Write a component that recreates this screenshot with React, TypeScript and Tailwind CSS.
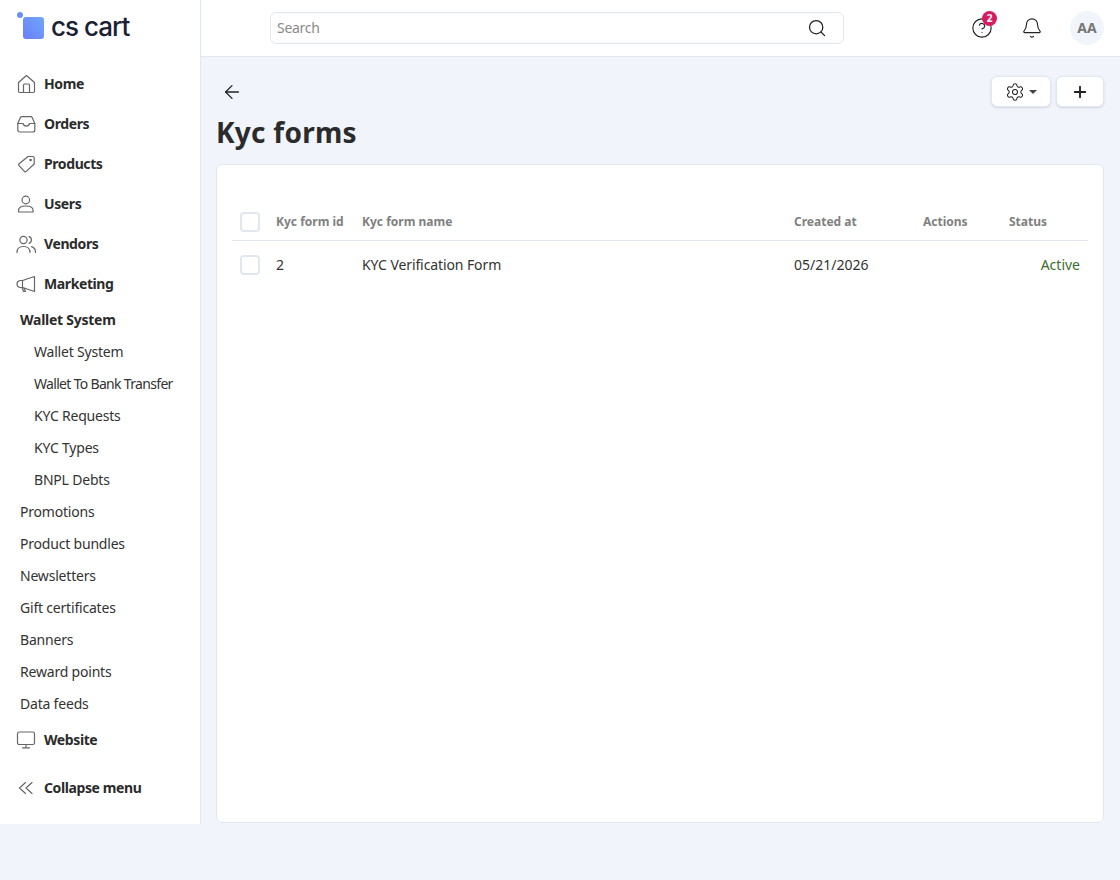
import { ArrowLeft, Bell, CircleHelp, Plus, Search, Settings } from 'lucide-react'
import type { ReactNode } from 'react'

const font = { fontFamily: '"Noto Sans", sans-serif' }

function NavIcon({ children }: { children: ReactNode }) {
  return (
    <svg width="20" height="20" viewBox="0 0 20 20" fill="none" stroke="currentColor" strokeWidth="1.2" strokeLinecap="round" strokeLinejoin="round">
      {children}
    </svg>
  )
}

function NavItem({ icon, label }: { icon: ReactNode; label: string }) {
  return (
    <div className="flex h-10 items-center pl-4">
      <span className="flex w-7 text-[#666]">{icon}</span>
      <span className="text-sm font-bold tracking-[-0.4px] text-[#2b2b2b]">{label}</span>
    </div>
  )
}

function SubItem({ label, indent, tight }: { label: string; indent?: boolean; tight?: boolean }) {
  return (
    <div className={`flex h-8 items-center text-sm text-[#333] ${indent ? 'pl-[34px]' : 'pl-5'} ${tight ? 'tracking-[-0.68px]' : 'tracking-[-0.2px]'}`}>
      {label}
    </div>
  )
}

export default function App() {
  return (
    <div style={font} className="flex h-[880px] w-[1120px] overflow-hidden bg-[#f1f4fb]">
      <aside className="h-[824px] w-[201px] shrink-0 border-r border-[#e2e6ef] bg-white">
        <div className="flex h-[64px] items-start pl-[17px] pt-3">
          <svg width="28" height="28" viewBox="0 0 28 28" className="shrink-0">
            <defs>
              <linearGradient id="logo" x1="1" y1="0" x2="0" y2="1">
                <stop offset="0" stopColor="#6ea8fb" />
                <stop offset="1" stopColor="#6c7dfb" />
              </linearGradient>
            </defs>
            <circle cx="3" cy="3" r="3" fill="#6b90f5" />
            <rect x="6" y="5" width="21" height="22" rx="3" fill="url(#logo)" />
          </svg>
          <span className="ml-[6px] text-[26px] leading-[30px] font-medium tracking-[-1px] text-[#1c2033]" style={{ fontFamily: 'Inter, sans-serif' }}>
            cs cart
          </span>
        </div>
        <NavItem
          label="Home"
          icon={
            <NavIcon>
              <path d="M2.5 8.5 10.5 1.5l8 7v8.8a1.2 1.2 0 0 1-1.2 1.2H3.7a1.2 1.2 0 0 1-1.2-1.2Z" />
              <path d="M7.5 18.5V11a1 1 0 0 1 1-1h4a1 1 0 0 1 1 1v7.5" />
            </NavIcon>
          }
        />
        <NavItem
          label="Orders"
          icon={
            <NavIcon>
              <path d="M1.8 9.5 4.4 3.6a1.8 1.8 0 0 1 1.6-1h8.6a1.8 1.8 0 0 1 1.6 1l2.6 5.9V16a2 2 0 0 1-2 2H3.8a2 2 0 0 1-2-2Z" />
              <path d="M1.8 9.5H7a3.4 3.4 0 0 0 6.600 0h5.200" />
            </NavIcon>
          }
        />
        <NavItem
          label="Products"
          icon={
            <NavIcon>
              <path d="M12 2.500h5a1.200 1.200 0 0 1 1.200 1.200V10L10 17.600a1 1 0 0 1-1.400 0l-5.800-6.200a1 1 0 0 1 0-1.400Z" />
              <circle cx="14.600" cy="6" r="0.700" fill="currentColor" />
            </NavIcon>
          }
        />
        <NavItem
          label="Users"
          icon={
            <NavIcon>
              <circle cx="9.800" cy="6" r="3.800" />
              <path d="M2.500 18v-1.500c0-2.800 3-4.500 7.300-4.500s7.300 1.700 7.300 4.500V18Z" />
            </NavIcon>
          }
        />
        <NavItem
          label="Vendors"
          icon={
            <NavIcon>
              <circle cx="7.500" cy="6" r="3.600" />
              <path d="M13 2.600a3.600 3.600 0 0 1 0 6.800" />
              <path d="M1 18.500c0-4 2.600-6 6.500-6s6.500 2 6.500 6" />
              <path d="M15.500 12.700c2.500.6 4 2.600 4 5.800" />
            </NavIcon>
          }
        />
        <NavItem
          label="Marketing"
          icon={
            <NavIcon>
              <path d="M18.500 2.500 6.500 6.500h-2a3.500 3.500 0 0 0 0 7h2l12 4Z" />
              <path d="M6.500 6.500v7" />
              <path d="m6 13.500 1.500 4h2L8 14" />
            </NavIcon>
          }
        />
        <div className="flex h-8 items-center pl-5 text-sm font-bold tracking-[-0.25px] text-[#2b2b2b]">Wallet System</div>
        <SubItem indent label="Wallet System" />
        <SubItem indent tight label="Wallet To Bank Transfer" />
        <SubItem indent label="KYC Requests" />
        <SubItem indent label="KYC Types" />
        <SubItem indent label="BNPL Debts" />
        <SubItem label="Promotions" />
        <SubItem label="Product bundles" />
        <SubItem label="Newsletters" />
        <SubItem label="Gift certificates" />
        <SubItem label="Banners" />
        <SubItem label="Reward points" />
        <SubItem label="Data feeds" />
        <NavItem
          label="Website"
          icon={
            <NavIcon>
              <rect x="1.500" y="2" width="17" height="12.500" rx="1.800" />
              <path d="M10 14.500v3M6.500 17.800h7" />
            </NavIcon>
          }
        />
        <div className="mt-2">
          <NavItem
            label="Collapse menu"
            icon={
              <NavIcon>
                <path d="M9.500 4.500 3.500 10l6 5.500M16 4.500 10 10l6 5.500" />
              </NavIcon>
            }
          />
        </div>
      </aside>
      <div className="flex min-w-0 flex-1 flex-col">
        <header className="flex h-[57px] shrink-0 items-center border-b border-[#e2e6ef] bg-white pl-[69px] pr-4">
          <div className="flex h-8 w-[574px] items-center justify-between rounded-md border border-[#e2e6ef] pl-1.5 pr-4">
            <span className="text-sm tracking-[-0.3px] text-[#8a8a8a]">Search</span>
            <Search size={20} strokeWidth={1.5} className="text-[#222]" />
          </div>
          <div className="relative ml-auto flex">
            <CircleHelp size={22} strokeWidth={1.25} className="text-[#222]" />
            <span className="absolute -right-[4px] -top-[6px] flex h-[15px] w-[15px] items-center justify-center rounded-full bg-[#d81b60] text-[10px] font-bold text-white">2</span>
          </div>
          <Bell size={22} strokeWidth={1.25} className="ml-[28px] text-[#222]" />
          <div className="ml-[27px] flex h-[34px] w-[34px] items-center justify-center rounded-full bg-[#f1f4fb] text-sm font-bold text-[#777]">AA</div>
        </header>
        <main className="flex min-h-0 flex-1 flex-col pb-[57px] pl-[15px] pr-4">
          <div className="flex items-start justify-between pt-[19px]">
            <ArrowLeft size={22} strokeWidth={1.4} className="ml-[5px] mt-[5px] text-[#222]" />
            <div className="flex gap-[5px]">
              <div className="flex h-[31px] w-[60px] items-center justify-center gap-1 rounded-md border border-[#e2e6ef] bg-white shadow-sm">
                <Settings size={20} strokeWidth={1.25} className="text-[#222]" />
                <span className="h-0 w-0 border-x-[4px] border-t-[4px] border-x-transparent border-t-[#444]" />
              </div>
              <div className="flex h-[31px] w-[48px] items-center justify-center rounded-md border border-[#e2e6ef] bg-white shadow-sm">
                <Plus size={18} strokeWidth={2.5} className="text-[#222]" />
              </div>
            </div>
          </div>
          <h1 className="mt-[5px] text-[28px] leading-[40px] font-bold tracking-[0.25px] text-[#2b2b2b]">Kyc forms</h1>
          <section className="mt-[12px] min-h-0 flex-1 rounded-md border border-[#e2e6ef] bg-white px-[15px] pt-10">
            <div className="flex h-9 items-center border-b border-[#e2e6ef] pb-[2px] text-xs font-bold text-[#808080]">
              <span className="ml-2 h-5 w-5 rounded border-2 border-[#e2e6ef]" />
              <span className="ml-4 w-[86px]">Kyc form id</span>
              <span className="w-[432px]">Kyc form name</span>
              <span className="w-[129px]">Created at</span>
              <span className="w-[86px]">Actions</span>
              <span>Status</span>
            </div>
            <div className="flex h-[48px] items-center text-sm text-[#333]">
              <span className="ml-2 h-5 w-5 rounded border-2 border-[#e2e6ef]" />
              <span className="ml-4 w-[86px]">2</span>
              <span className="w-[432px] tracking-[-0.1px]">KYC Verification Form</span>
              <span className="w-[129px]">05/21/2026</span>
              <span className="ml-auto pr-2 text-[#3b6e2e]">Active</span>
            </div>
          </section>
        </main>
      </div>
    </div>
  )
}
